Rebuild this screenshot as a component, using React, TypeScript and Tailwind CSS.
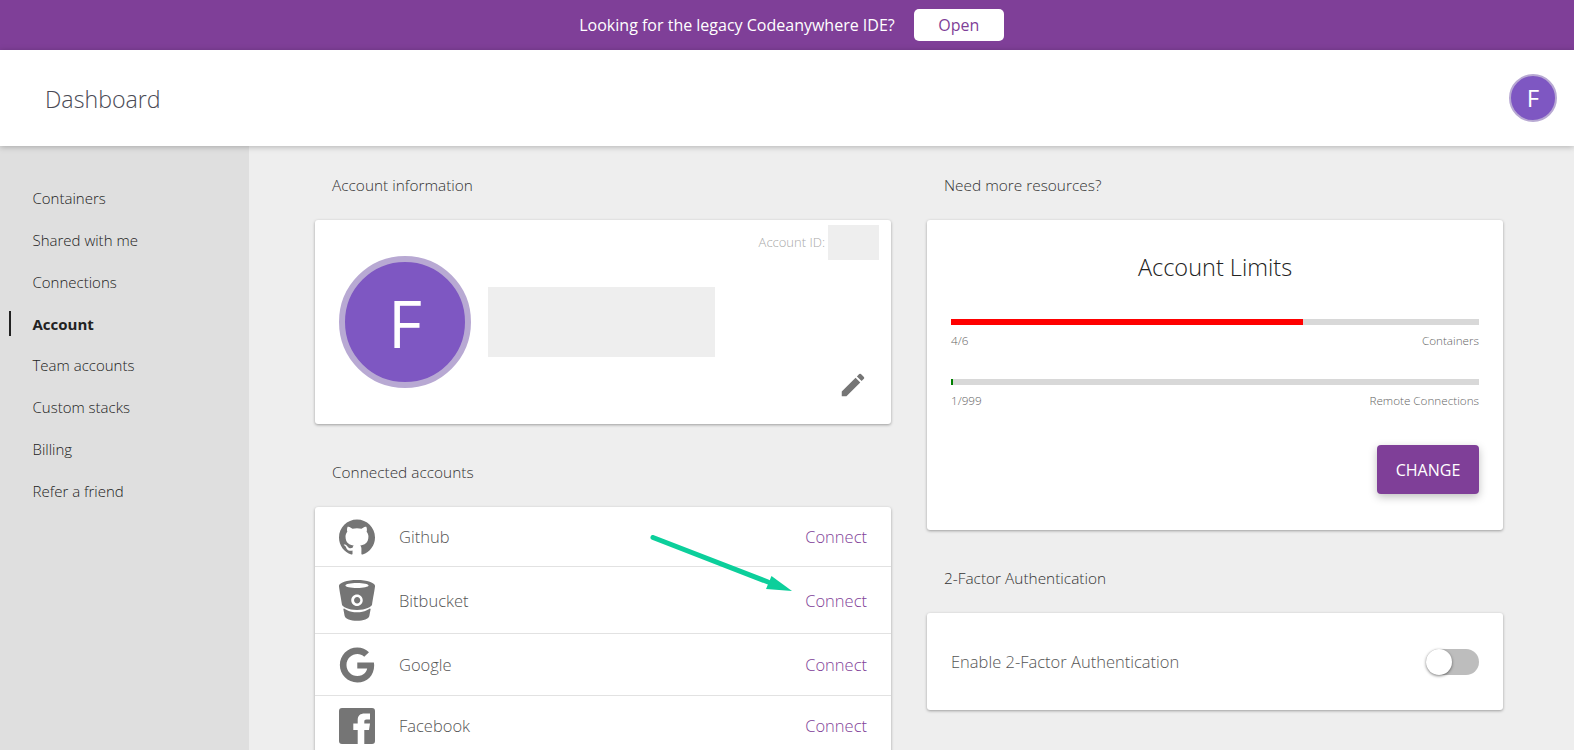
import React from 'react';
import { MdEdit } from 'react-icons/md';
import { SiGithub } from 'react-icons/si';
import { DiBitbucket } from 'react-icons/di';
import { FaGoogle } from 'react-icons/fa';

const navItems = ['Containers', 'Shared with me', 'Connections', 'Account', 'Team accounts', 'Custom stacks', 'Billing', 'Refer a friend'];

function FacebookIcon() {
  return (
    <svg className="w-9 h-9" viewBox="0 0 36 36" fill="currentColor">
      <path
        fillRule="evenodd"
        d="M3 0H33A3 3 0 0 1 36 3V33A3 3 0 0 1 33 36H25.3V22H30L31 15.5H25.3V13.5C25.3 12.3 25.8 11.5 27.5 11.5H31V5.5H25.5C21.5 5.5 18.7 7.5 18.7 12V15.5H14.3V22H18.7V36H3A3 3 0 0 1 0 33V3A3 3 0 0 1 3 0Z"
      />
    </svg>
  );
}

const connections = [
  { name: 'Github', icon: <SiGithub className="w-9 h-9" />, rowClass: 'h-[60px] border-b', textClass: 'pt-[2px]' },
  { name: 'Bitbucket', icon: <DiBitbucket className="w-[52px] h-[52px] -mx-2" />, rowClass: 'h-[67px] border-b', textClass: 'pt-[2px]' },
  { name: 'Google', icon: <FaGoogle className="w-9 h-9" />, rowClass: 'h-[62px] border-b', textClass: 'pt-[2px]' },
  { name: 'Facebook', icon: <FacebookIcon />, rowClass: 'h-[60px]', textClass: '' },
];

function SectionTitle({ children, className }: { children: React.ReactNode; className?: string }) {
  return <h2 className={`pl-[17px] text-[15.4px] leading-[22px] font-light text-[#333] ${className ?? ''}`}>{children}</h2>;
}

function Limit({ used, label, percent, color }: { used: string; label: string; percent: number; color: string }) {
  return (
    <div>
      <div className="h-[6px] bg-[#d8d8d8]">
        <div className={`h-full ${color}`} style={{ width: `${percent}%` }} />
      </div>
      <div className="flex justify-between mt-[7px] text-[11.7px] leading-[16px] font-light text-[#666]">
        <span>{used}</span>
        <span>{label}</span>
      </div>
    </div>
  );
}

export default function App() {
  return (
    <div className="h-screen overflow-hidden flex flex-col bg-[#eeeeee] font-['Open_Sans',sans-serif]">
      <div className="h-[50px] shrink-0 bg-[#7f3f98] flex items-center justify-center gap-[19px] pl-[9px]">
        <span className="text-white text-[16px]">Looking for the legacy Codeanywhere IDE?</span>
        <button className="w-[90px] h-8 bg-white rounded-[5px] text-[#7f3f98] text-[16px] font-medium">Open</button>
      </div>

      <header className="relative z-10 h-[96px] shrink-0 bg-white shadow-[0_1px_6px_rgba(0,0,0,0.25)] flex items-center justify-between pl-[45px] pr-[17px]">
        <h1 className="pt-[3px] text-[23.2px] font-light text-[#4a4a55]">Dashboard</h1>
        <div className="w-12 h-12 rounded-full bg-[#7e57c2] border-2 border-[#b8a9d3] flex items-center justify-center text-white text-[24px]">F</div>
      </header>

      <div className="flex-1 min-h-0 flex">
        <nav className="w-[249px] shrink-0 bg-[#dfdfdf] pt-[31.5px]">
          {navItems.map((item) => (
            <div key={item} className="relative h-[41.8px] flex items-center pl-[32.5px] text-[15px] font-light text-[#222]">
              {item === 'Account' ? (
                <>
                  <span className="absolute left-[9px] top-[8px] w-[2px] h-[25px] bg-[#222]" />
                  <span className="font-bold">{item}</span>
                </>
              ) : item}
            </div>
          ))}
        </nav>

        <main className="flex-1 min-w-0 relative pl-[66px] pr-[71px] pt-[29px] grid grid-cols-2 gap-x-[36px] content-start">
          <div>
            <SectionTitle>Account information</SectionTitle>
            <section className="relative mt-[23px] h-[204px] bg-white rounded-[3px] shadow-[0_1px_3px_rgba(0,0,0,0.35)] flex items-center pl-[24px]">
              <div className="w-[132px] h-[132px] rounded-full bg-[#7e57c2] border-[6px] border-[#b8a9d3] flex items-center justify-center text-white text-[66px]">F</div>
              <div className="ml-[17px] w-[227px] h-[70px] bg-[#eeeeee]" />
              <div className="absolute top-[5px] right-[12px] flex items-center gap-[3px]">
                <span className="text-[13px] font-light text-[#aaa]">Account ID:</span>
                <div className="w-[51px] h-[35px] bg-[#eeeeee]" />
              </div>
              <MdEdit className="absolute right-[23px] bottom-[24px] w-[30px] h-[30px] text-[#757575]" />
            </section>

            <SectionTitle className="mt-[38px]">Connected accounts</SectionTitle>
            <section className="mt-[23px] bg-white rounded-[3px] shadow-[0_1px_3px_rgba(0,0,0,0.35)]">
              {connections.map((c) => (
                <div key={c.name} className={`${c.rowClass} flex items-center px-[24px] border-[#e2e2e2] text-[16.5px] font-light`}>
                  <span className="w-9 flex justify-center text-[#757575]">{c.icon}</span>
                  <span className={`ml-[24px] text-[#555] ${c.textClass}`}>{c.name}</span>
                  <a className={`ml-auto text-[#7f3f98] ${c.textClass}`}>Connect</a>
                </div>
              ))}
            </section>
          </div>

          <div>
            <SectionTitle>Need more resources?</SectionTitle>
            <section className="mt-[23px] h-[310px] bg-white rounded-[3px] shadow-[0_1px_3px_rgba(0,0,0,0.35)] px-[24px] pt-[31px]">
              <h3 className="text-center text-[23.5px] leading-8 font-light text-[#222]">Account Limits</h3>
              <div className="mt-[36px] flex flex-col gap-[31px]">
                <Limit used="4/6" label="Containers" percent={66.7} color="bg-[#ff0000]" />
                <Limit used="1/999" label="Remote Connections" percent={0.4} color="bg-[#008000]" />
              </div>
              <div className="flex justify-end mt-[37px]">
                <button className="w-[102px] h-[49px] rounded-[4px] bg-[#7f3f98] text-white text-[16px] shadow-[0_3px_8px_rgba(0,0,0,0.25)]">CHANGE</button>
              </div>
            </section>

            <SectionTitle className="mt-[38px]">2-Factor Authentication</SectionTitle>
            <section className="mt-[23px] h-[97px] bg-white rounded-[3px] shadow-[0_1px_3px_rgba(0,0,0,0.35)] flex items-center justify-between px-[24px]">
              <span className="pt-[2px] text-[16.5px] font-light text-[#555]">Enable 2-Factor Authentication</span>
              <div className="w-[53px] h-[26px] rounded-full bg-[#bdbdbd] flex items-center">
                <span className="w-[26px] h-[26px] rounded-full bg-white shadow-[0_1px_3px_rgba(0,0,0,0.5)]" />
              </div>
            </section>
          </div>

          <svg className="absolute left-[400px] top-[389px] w-[145px] h-[58px]" viewBox="0 0 145 58">
            <path d="M4 2.5 L119 47" stroke="#0ccf9b" strokeWidth="5" strokeLinecap="round" fill="none" />
            <path d="M143 56 L117 54 L122.5 41 Z" fill="#0ccf9b" />
          </svg>
        </main>
      </div>
    </div>
  );
}
